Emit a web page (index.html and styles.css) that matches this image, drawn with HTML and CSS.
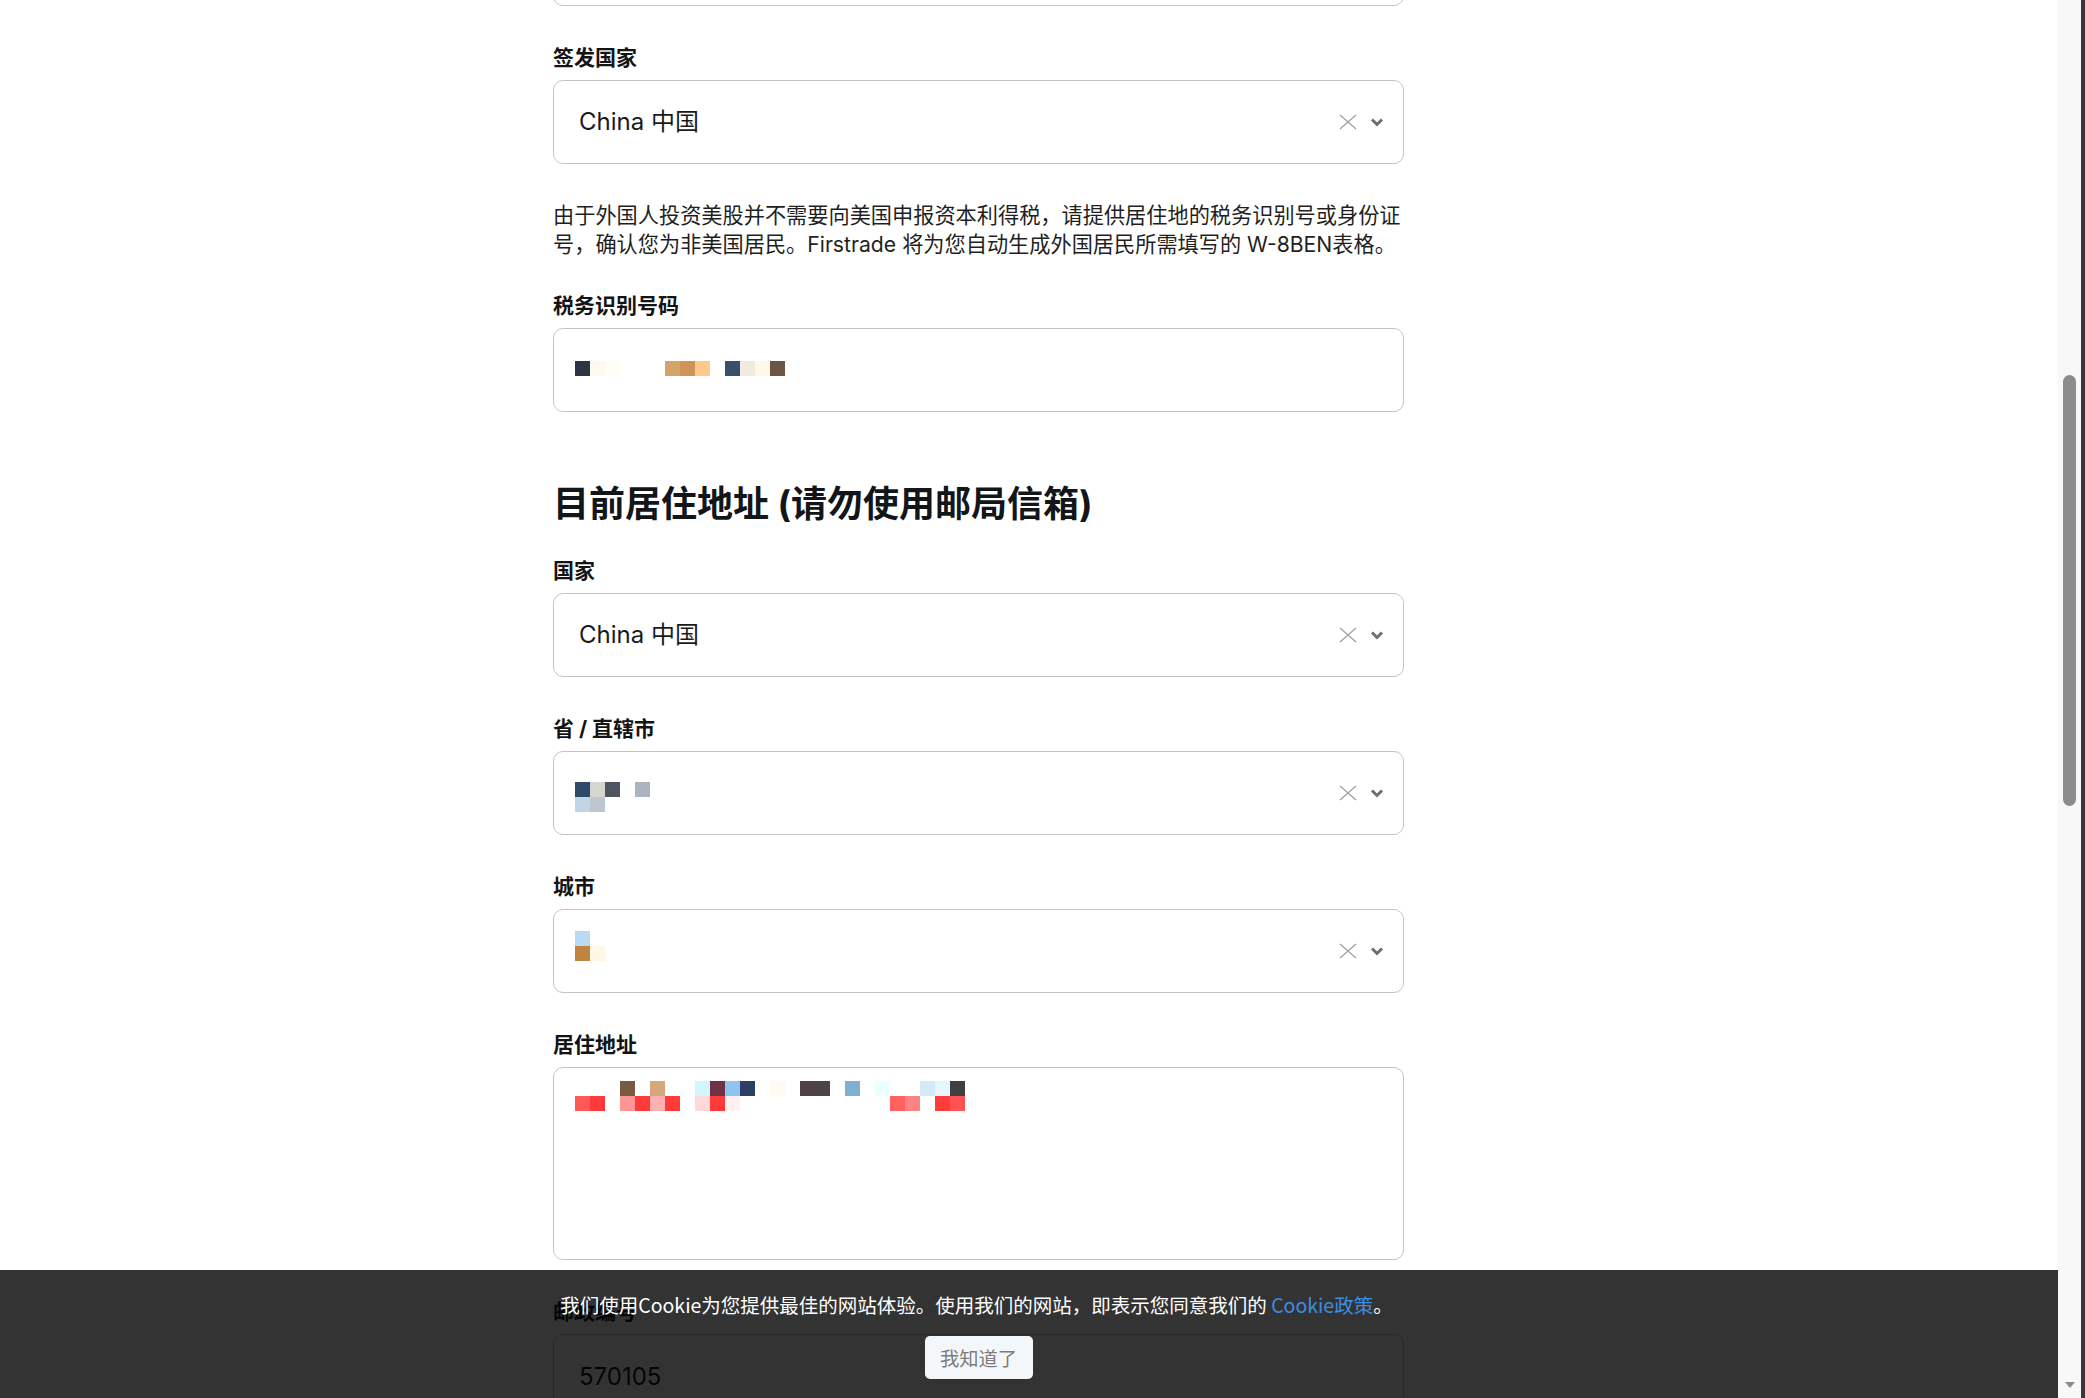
FILE: index.html
```html
<!DOCTYPE html>
<html lang="zh-CN">
<head>
    <meta charset="UTF-8">
    <meta name="viewport" content="width=device-width, initial-scale=1.0">
    <title>开户 - 个人信息</title>
    <link rel="stylesheet" href="styles.css">
</head>
<body>
    <div class="page">
        <div class="form">
            <div class="field"></div>

            <div class="group">
                <label class="label">签发国家</label>
                <div class="field select">
                    <span class="value text">China 中国</span>
                    <span class="controls">
                        <svg width="18" height="16" viewBox="0 0 18 16"><path d="M1 1 L17 15 M17 1 L1 15" stroke="#a3a3a3" stroke-width="1.4" fill="none"/></svg>
                        <svg width="14" height="9" viewBox="0 0 14 9"><path d="M2 1.5 L7 6.5 L12 1.5" stroke="#6f6f6f" stroke-width="3" fill="none"/></svg>
                    </span>
                </div>
            </div>

            <p class="note">由于外国人投资美股并不需要向美国申报资本利得税，请提供居住地的税务识别号或身份证号，确认您为非美国居民。Firstrade 将为您自动生成外国居民所需填写的 W-8BEN表格。</p>

            <div class="group">
                <label class="label">税务识别号码</label>
                <div class="field">
                    <div class="mosaic single">
                        <i style="background:#2d3340"></i><i style="background:#fff8ee"></i><i style="background:#fffdf5"></i><i></i><i></i><i></i><i style="background:#d4a36b"></i><i style="background:#cf9457"></i><i style="background:#ffc98a"></i><i></i><i style="background:#3a5068"></i><i style="background:#f2eadf"></i><i style="background:#fff8e6"></i><i style="background:#6e5443"></i>
                    </div>
                </div>
            </div>

            <h2 class="section-title">目前居住地址 (请勿使用邮局信箱)</h2>

            <div class="group">
                <label class="label">国家</label>
                <div class="field select">
                    <span class="value text">China 中国</span>
                    <span class="controls">
                        <svg width="18" height="16" viewBox="0 0 18 16"><path d="M1 1 L17 15 M17 1 L1 15" stroke="#a3a3a3" stroke-width="1.4" fill="none"/></svg>
                        <svg width="14" height="9" viewBox="0 0 14 9"><path d="M2 1.5 L7 6.5 L12 1.5" stroke="#6f6f6f" stroke-width="3" fill="none"/></svg>
                    </span>
                </div>
            </div>

            <div class="group">
                <label class="label">省 / 直辖市</label>
                <div class="field select">
                    <div class="value">
                        <div class="mosaic lower">
                            <i style="background:#2e4a68"></i><i style="background:#d5d6ce"></i><i style="background:#4d5560"></i><i></i><i style="background:#aab5c0"></i>
                            <i class="row" style="background:#c2d4e8"></i><i style="background:#c0c6d0"></i>
                        </div>
                    </div>
                    <span class="controls">
                        <svg width="18" height="16" viewBox="0 0 18 16"><path d="M1 1 L17 15 M17 1 L1 15" stroke="#a3a3a3" stroke-width="1.4" fill="none"/></svg>
                        <svg width="14" height="9" viewBox="0 0 14 9"><path d="M2 1.5 L7 6.5 L12 1.5" stroke="#6f6f6f" stroke-width="3" fill="none"/></svg>
                    </span>
                </div>
            </div>

            <div class="group">
                <label class="label">城市</label>
                <div class="field select">
                    <div class="value">
                        <div class="mosaic upper">
                            <i style="background:#b8daf5"></i>
                            <i class="row" style="background:#c08440"></i><i style="background:#fff6e6"></i>
                        </div>
                    </div>
                    <span class="controls">
                        <svg width="18" height="16" viewBox="0 0 18 16"><path d="M1 1 L17 15 M17 1 L1 15" stroke="#a3a3a3" stroke-width="1.4" fill="none"/></svg>
                        <svg width="14" height="9" viewBox="0 0 14 9"><path d="M2 1.5 L7 6.5 L12 1.5" stroke="#6f6f6f" stroke-width="3" fill="none"/></svg>
                    </span>
                </div>
            </div>

            <div class="group">
                <label class="label">居住地址</label>
                <div class="field textarea">
                    <div class="mosaic">
                        <i></i><i></i><i></i><i style="background:#7a5a40"></i><i></i><i style="background:#d4a77c"></i><i></i><i></i><i style="background:#d0f8fc"></i><i style="background:#6e3344"></i><i style="background:#90c4f0"></i><i style="background:#2c4066"></i><i></i><i style="background:#fffbf0"></i><i></i><i style="background:#4e4248"></i><i style="background:#4e4248"></i><i></i><i style="background:#80b0d0"></i><i></i><i style="background:#eaffff"></i><i></i><i></i><i style="background:#d5eaf8"></i><i style="background:#e6f6fc"></i><i style="background:#404040"></i>
                        <i style="background:#ff5858"></i><i style="background:#ff3a3a"></i><i></i><i style="background:#ff9595"></i><i style="background:#ff3a3a"></i><i style="background:#ffb0b0"></i><i style="background:#ff3a3a"></i><i></i><i style="background:#ffd9d9"></i><i style="background:#ff3a3a"></i><i style="background:#fff1f1"></i><i></i><i></i><i></i><i></i><i></i><i></i><i></i><i></i><i></i><i></i><i style="background:#ff6060"></i><i style="background:#ff8282"></i><i></i><i style="background:#ff3c3c"></i><i style="background:#ff5252"></i>
                    </div>
                </div>
            </div>

            <div class="group">
                <label class="label">邮政编号</label>
                <div class="field">
                    <span class="value">570105</span>
                </div>
            </div>
        </div>

        <div class="cookie-bar">
            <div class="cookie-inner">
                <p class="cookie-text">我们使用Cookie为您提供最佳的网站体验。使用我们的网站，即表示您同意我们的 <a href="#">Cookie政策</a>。</p>
                <button class="cookie-btn">我知道了</button>
            </div>
        </div>
    </div>

    <div class="scrollbar">
        <div class="thumb"></div>
        <div class="arrow"></div>
    </div>
    <div class="edge"></div>
</body>
</html>
```

FILE: styles.css
```css
body {
    margin: 0;
    height: 100vh;
    overflow: hidden;
    display: flex;
    background-color: #fff;
    color: #1a1a1a;
    font-family: Inter, "Noto Sans CJK SC", sans-serif;
}

.page {
    flex: 1;
    position: relative;
    overflow: hidden;
}

.form {
    width: 851px;
    margin: -78px 0 0 553px;
}

.group {
    margin-top: 34px;
}

.label {
    display: block;
    font-size: 21px;
    font-weight: 700;
    line-height: 32px;
    padding-top: 2px;
    margin-bottom: 6px;
    color: #141414;
}

.field {
    box-sizing: border-box;
    height: 84px;
    border: 1px solid #c4c4c4;
    border-radius: 10px;
    background-color: #fff;
    display: flex;
    align-items: center;
    padding: 0 19px 0 25px;
}

.value {
    flex: 1;
    font-size: 24px;
    color: #1a1a1a;
}

.value.text {
    padding-bottom: 5px;
}

.controls {
    display: flex;
    align-items: center;
    gap: 13px;
}

.controls svg {
    display: block;
}

.textarea {
    height: 193px;
    align-items: flex-start;
    padding-top: 13px;
}

.note {
    margin: 37px 0 0;
    font-size: 21.2px;
    line-height: 28.5px;
    color: #1f1f1f;
}

.note + .group {
    margin-top: 30px;
}

.section-title {
    margin: 68px 0 0;
    font-size: 36px;
    line-height: 48px;
    font-weight: 700;
    color: #121619;
}

.section-title + .group {
    margin-top: 25px;
}

/* redacted values */
.mosaic {
    display: grid;
    grid-template-columns: repeat(26, 15px);
    grid-auto-rows: 15px;
    margin-left: -4px;
}

.mosaic i {
    display: block;
}

.mosaic .row {
    grid-column: 1;
}

.mosaic.single {
    margin-bottom: 3px;
}

.mosaic.lower {
    margin-top: 8px;
}

.mosaic.upper {
    margin-bottom: 10px;
}

.cookie-bar {
    position: absolute;
    left: 0;
    right: 0;
    bottom: 0;
    height: 128px;
    background-color: rgba(0, 0, 0, 0.8);
}

.cookie-inner {
    width: 851px;
    margin-left: 551px;
    padding-top: 21px;
    text-align: center;
}

.cookie-text {
    margin: 0;
    color: #fff;
    font-family: "Noto Sans CJK SC", sans-serif;
    font-size: 19.5px;
    line-height: 28px;
}

.cookie-text a {
    color: #3b8fe3;
    text-decoration: none;
}

.cookie-btn {
    display: block;
    margin: 17px auto 0;
    width: 108px;
    height: 43px;
    border: none;
    border-radius: 5px;
    background-color: #f4f7f9;
    color: #7c7c7c;
    font-family: "Noto Sans CJK SC", sans-serif;
    font-size: 19.3px;
    padding: 0;
    position: relative;
    left: 2px;
}

.scrollbar {
    width: 23px;
    background-color: #f8f8f8;
    display: flex;
    flex-direction: column;
    align-items: center;
}

.thumb {
    margin-top: 375px;
    width: 13px;
    height: 431px;
    border-radius: 7px;
    background-color: #8c8c8c;
}

.arrow {
    margin-top: auto;
    margin-bottom: 10px;
    width: 0;
    height: 0;
    border-left: 5px solid transparent;
    border-right: 5px solid transparent;
    border-top: 6px solid #8c8c8c;
}

.edge {
    width: 4px;
    background-color: #383838;
}
```
